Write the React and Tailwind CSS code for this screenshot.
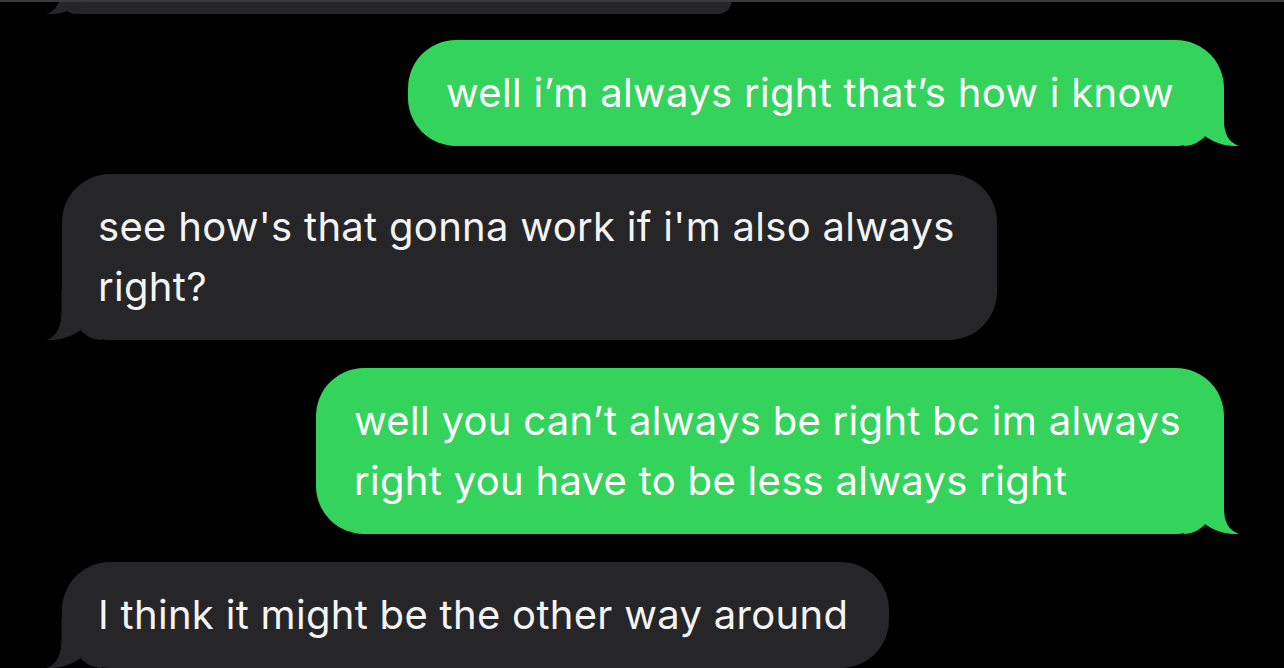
import React from "react";

const GREEN = "#33d35c";
const GRAY = "#262628";

function TailRight({ color }) {
  return (
    <svg
      className="absolute bottom-0 right-[-16px] pointer-events-none"
      width="56"
      height="50"
      viewBox="0 0 56 50"
    >
      <path
        d="M0,0 L40,0 L40,24 C40,37 44,46 55,50 C44,51 30,47 21,40 C16,46 8,50 0,50 Z"
        fill={color}
      />
    </svg>
  );
}

function TailLeft({ color }) {
  return (
    <svg
      className="absolute bottom-0 left-[-17px] pointer-events-none"
      width="57"
      height="50"
      viewBox="0 0 56 50"
      style={{ transform: "scaleX(-1)" }}
    >
      <path
        d="M0,0 L40,0 L40,20 C40,36 44,46 55,50 C44,51 30,47 21,40 C16,46 8,50 0,50 Z"
        fill={color}
      />
    </svg>
  );
}

function Sent({ width, children }) {
  return (
    <div
      className="relative self-end mr-[60px] rounded-[48px] bg-[#33d35c] pl-[38px] pt-[23px] pb-[23px] text-white whitespace-nowrap"
      style={{ width }}
    >
      <div className="relative z-10">{children}</div>
      <TailRight color={GREEN} />
    </div>
  );
}

function Received({ width, children }) {
  return (
    <div
      className="relative self-start ml-[62px] rounded-[48px] bg-[#262628] pl-[36px] pt-[23px] pb-[23px] text-[#f4f4f5] whitespace-nowrap"
      style={{ width }}
    >
      <div className="relative z-10">{children}</div>
      <TailLeft color={GRAY} />
    </div>
  );
}

export default function App() {
  return (
    <div
      className="w-[1284px] h-[668px] overflow-hidden bg-black flex flex-col text-[40px] leading-[60px] tracking-[0.3px]"
      style={{ fontFamily: "Inter, 'Noto Sans', sans-serif" }}
    >
      <div className="relative h-[14px] shrink-0">
        <div className="relative ml-[62px] w-[670px] h-[14px] rounded-b-[40px] bg-[#262628]">
          <TailLeft color={GRAY} />
        </div>
        <div className="absolute top-0 left-0 w-full h-[2px] bg-[#3a3a3c]" />
      </div>
      <div className="flex flex-col gap-[28px] mt-[26px]">
        <Sent width={816}>well i’m always right that’s how i know</Sent>
        <Received width={935}>
          see how's that gonna work if i'm also always
          <br />
          right?
        </Received>
        <Sent width={908}>
          well you can’t always be right bc im always
          <br />
          right you have to be less always right
        </Sent>
        <Received width={827}>I think it might be the other way around</Received>
      </div>
    </div>
  );
}
